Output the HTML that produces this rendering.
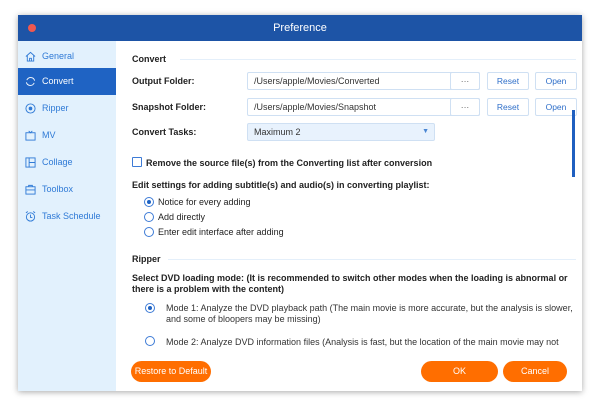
<!DOCTYPE html><html><head><style>
*{margin:0;padding:0;box-sizing:border-box}
body{width:600px;height:412px;background:#fff;font-family:"Liberation Sans",sans-serif;position:relative;overflow:hidden}
.win{position:absolute;left:18px;top:15px;width:564px;height:376px;background:#fff;box-shadow:0 1px 6px rgba(0,0,0,.35)}
.title{position:absolute;left:0;top:0;width:564px;height:26px;background:#1d54a6;color:#fff;font-size:11px;text-align:center;line-height:26px}
.dot{position:absolute;left:10px;top:9px;width:8px;height:8px;border-radius:50%;background:#f0584f}
.side{position:absolute;left:0;top:26px;width:98px;height:350px;background:#e2f1fd}
.it{position:absolute;left:0;width:98px;height:27px;font-size:9px;color:#2f7ad6;line-height:27px;padding-left:24px}
.it.sel{background:#1f63c3;color:#fff}
.ic{position:absolute;left:7px;top:8px;width:11px;height:11px}
.a{position:absolute;font-size:9px;color:#222;white-space:nowrap}
.b{font-weight:bold}
.inp{position:absolute;height:18px;border:1px solid #cfe0f3;border-radius:2px;background:#fff;font-size:9px;line-height:16px;padding-left:6px;color:#333}
.btn{position:absolute;height:18px;border:1px solid #cfe0f3;border-radius:2px;font-size:8.5px;color:#2f6fc9;text-align:center;line-height:16px}
.rad{position:absolute;width:10px;height:10px;border:1px solid #3d7bd6;border-radius:50%;background:#fff}
.rad.on::after{content:"";position:absolute;left:2px;top:2px;width:4px;height:4px;border-radius:50%;background:#1f63c3}
.ob{position:absolute;height:21px;border-radius:11px;background:#ff6e00;color:#fff;font-size:9px;text-align:center;line-height:21px}
.line{position:absolute;height:1px;background:#e4effa}
</style></head><body>
<div class="win">
<div class="title"><div class="dot"></div>Preference</div>
<div class="side">
<div class="it" style="top:2px"><svg class="ic" viewBox="0 0 12 12" fill="none" stroke="#2f7ad6" stroke-width="1"><path d="M1 6L6 1.5 11 6M2.5 5v6h7V5M5 11V8h2v3"/></svg>General</div>
<div class="it sel" style="top:27px"><svg class="ic" viewBox="0 0 12 12" fill="none" stroke="#fff" stroke-width="1"><path d="M2 4.5A4.5 4.5 0 0 1 10.5 5M10 7.5A4.5 4.5 0 0 1 1.5 7"/></svg>Convert</div>
<div class="it" style="top:54px"><svg class="ic" viewBox="0 0 12 12" fill="none" stroke="#2f7ad6" stroke-width="1"><circle cx="6" cy="6" r="5"/><circle cx="6" cy="6" r="1.5" fill="#2f7ad6"/></svg>Ripper</div>
<div class="it" style="top:81px"><svg class="ic" viewBox="0 0 12 12" fill="none" stroke="#2f7ad6" stroke-width="1"><rect x="1" y="3" width="10" height="8"/><path d="M4 1l2 2 2-2"/></svg>MV</div>
<div class="it" style="top:108px"><svg class="ic" viewBox="0 0 12 12" fill="none" stroke="#2f7ad6" stroke-width="1"><rect x="1" y="1" width="10" height="10"/><path d="M4.5 1v10M4.5 6H11"/></svg>Collage</div>
<div class="it" style="top:135px"><svg class="ic" viewBox="0 0 12 12" fill="none" stroke="#2f7ad6" stroke-width="1"><rect x="1" y="3" width="10" height="8"/><path d="M4 3V1.5h4V3M1 6.5h10"/></svg>Toolbox</div>
<div class="it" style="top:162px"><svg class="ic" viewBox="0 0 12 12" fill="none" stroke="#2f7ad6" stroke-width="1"><circle cx="6" cy="6.5" r="4.5"/><path d="M6 4v3h2M1 2l2-1.5M11 2L9 .5"/></svg>Task Schedule</div>
</div>
</div>
<div class="a b" style="left:132px;top:54px">Convert</div><div class="line" style="left:180px;top:59px;width:396px"></div>
<div class="a b" style="left:132px;top:76px">Output Folder:</div>
<div class="inp" style="left:247px;top:72px;width:233px">/Users/apple/Movies/Converted</div>
<div class="btn" style="left:450px;top:72px;width:30px;color:#555">···</div>
<div class="btn" style="left:487px;top:72px;width:42px">Reset</div>
<div class="btn" style="left:535px;top:72px;width:42px">Open</div>
<div class="a b" style="left:132px;top:102px">Snapshot Folder:</div>
<div class="inp" style="left:247px;top:98px;width:233px">/Users/apple/Movies/Snapshot</div>
<div class="btn" style="left:450px;top:98px;width:30px;color:#555">···</div>
<div class="btn" style="left:487px;top:98px;width:42px">Reset</div>
<div class="btn" style="left:535px;top:98px;width:42px">Open</div>
<div style="position:absolute;left:572px;top:110px;width:3px;height:67px;background:#1f5fc0"></div>
<div class="a b" style="left:132px;top:127px">Convert Tasks:</div>
<div class="inp" style="left:247px;top:123px;width:188px;background:#e8f2fd">Maximum 2<span style="position:absolute;right:5px;top:0;color:#4a86d3;font-size:7px">▼</span></div>
<div style="position:absolute;left:132px;top:157px;width:10px;height:10px;border:1px solid #3d7bd6;border-radius:1px"></div>
<div class="a b" style="left:146px;top:158px">Remove the source file(s) from the Converting list after conversion</div>
<div class="a b" style="left:132px;top:180px">Edit settings for adding subtitle(s) and audio(s) in converting playlist:</div>
<div class="rad on" style="left:144px;top:197px"></div><div class="a" style="left:158px;top:197px">Notice for every adding</div>
<div class="rad" style="left:144px;top:212px"></div><div class="a" style="left:158px;top:212px">Add directly</div>
<div class="rad" style="left:144px;top:227px"></div><div class="a" style="left:158px;top:227px">Enter edit interface after adding</div>
<div class="line" style="left:168px;top:259px;width:408px"></div>
<div class="a b" style="left:132px;top:254px">Ripper</div>
<div class="a b" style="left:132px;top:273px;line-height:11px">Select DVD loading mode: (It is recommended to switch other modes when the loading is abnormal or<br>there is a problem with the content)</div>
<div class="rad on" style="left:145px;top:303px"></div>
<div class="a" style="left:166px;top:303px;line-height:11px;color:#333">Mode 1: Analyze the DVD playback path (The main movie is more accurate, but the analysis is slower,<br>and some of bloopers may be missing)</div>
<div class="rad" style="left:145px;top:336px"></div>
<div class="a" style="left:166px;top:337px;color:#333">Mode 2: Analyze DVD information files (Analysis is fast, but the location of the main movie may not</div>
<div class="ob" style="left:131px;top:361px;width:80px">Restore to Default</div>
<div class="ob" style="left:421px;top:361px;width:77px">OK</div>
<div class="ob" style="left:503px;top:361px;width:64px">Cancel</div>
</body></html>
